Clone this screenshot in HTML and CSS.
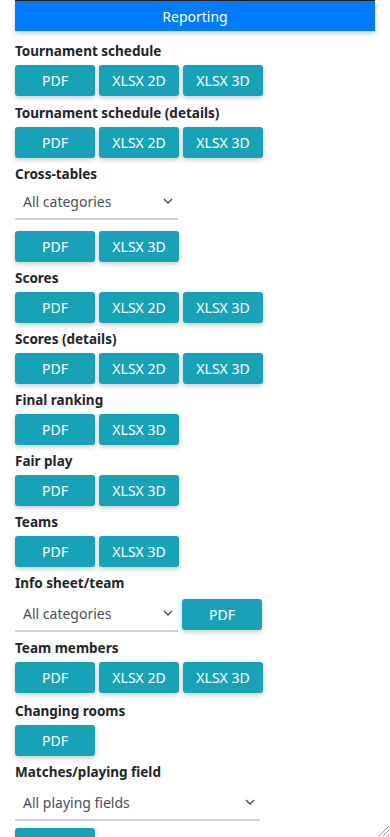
FILE: index.html
```html
<!DOCTYPE html>
<html lang="en">
<head>
<meta charset="utf-8">
<title>Reporting</title>
<link rel="stylesheet" href="styles.css">
</head>
<body>
<div class="topline"></div>
<main class="page">
  <div class="header">Reporting</div>

  <section class="block first">
    <h3 class="title">Tournament schedule</h3>
    <div class="btns"><button class="btn">PDF</button><button class="btn">XLSX 2D</button><button class="btn">XLSX 3D</button></div>
  </section>

  <section class="block second">
    <h3 class="title">Tournament schedule (details)</h3>
    <div class="btns"><button class="btn">PDF</button><button class="btn">XLSX 2D</button><button class="btn">XLSX 3D</button></div>
  </section>

  <section class="block">
    <h3 class="title">Cross-tables</h3>
    <div class="select"><span>All categories</span><svg class="chev" width="10" height="6" viewBox="0 0 10 6"><path d="M1 1l4 4 4-4" fill="none" stroke="#495057" stroke-width="1.4"/></svg></div>
    <div class="btns spaced"><button class="btn">PDF</button><button class="btn">XLSX 3D</button></div>
  </section>

  <section class="block">
    <h3 class="title">Scores</h3>
    <div class="btns"><button class="btn">PDF</button><button class="btn">XLSX 2D</button><button class="btn">XLSX 3D</button></div>
  </section>

  <section class="block">
    <h3 class="title">Scores (details)</h3>
    <div class="btns"><button class="btn">PDF</button><button class="btn">XLSX 2D</button><button class="btn">XLSX 3D</button></div>
  </section>

  <section class="block">
    <h3 class="title">Final ranking</h3>
    <div class="btns"><button class="btn">PDF</button><button class="btn">XLSX 3D</button></div>
  </section>

  <section class="block">
    <h3 class="title">Fair play</h3>
    <div class="btns"><button class="btn">PDF</button><button class="btn">XLSX 3D</button></div>
  </section>

  <section class="block">
    <h3 class="title">Teams</h3>
    <div class="btns"><button class="btn">PDF</button><button class="btn">XLSX 3D</button></div>
  </section>

  <section class="block">
    <h3 class="title">Info sheet/team</h3>
    <div class="row">
      <div class="select"><span>All categories</span><svg class="chev" width="10" height="6" viewBox="0 0 10 6"><path d="M1 1l4 4 4-4" fill="none" stroke="#495057" stroke-width="1.4"/></svg></div>
      <button class="btn">PDF</button>
    </div>
  </section>

  <section class="block">
    <h3 class="title">Team members</h3>
    <div class="btns"><button class="btn">PDF</button><button class="btn">XLSX 2D</button><button class="btn">XLSX 3D</button></div>
  </section>

  <section class="block loose">
    <h3 class="title">Changing rooms</h3>
    <div class="btns"><button class="btn">PDF</button></div>
  </section>

  <section class="block">
    <h3 class="title">Matches/playing field</h3>
    <div class="select wide"><span>All playing fields</span><svg class="chev" width="10" height="6" viewBox="0 0 10 6"><path d="M1 1l4 4 4-4" fill="none" stroke="#495057" stroke-width="1.4"/></svg></div>
    <div class="btns spaced2"><button class="btn">PDF</button></div>
  </section>
</main>
<svg class="grip" width="14" height="14" viewBox="0 0 14 14"><path d="M13 3L3 13M13 7L7 13M13 11L11 13" stroke="#9a9a9a" stroke-width="1"/></svg>
</body>
</html>
```
FILE: styles.css
```css
html, body {
  margin: 0;
  padding: 0;
  background: #fff;
}
body {
  font-family: "Noto Sans", "Open Sans", sans-serif;
  color: #212529;
  font-size: 14px;
}
.topline {
  height: 1px;
  margin: 0 15px;
  background: #222;
}
.page {
  padding: 0 15px 30px;
}
.header {
  height: 30px;
  background: #007bff;
  color: #fff;
  font-size: 14px;
  display: flex;
  align-items: center;
  justify-content: center;
  box-shadow: 0 3px 6px rgba(0,0,0,0.18);
}
.block {
  margin-top: 6.5px;
}
.block.first {
  margin-top: 10px;
}
.block.second {
  margin-top: 7.5px;
}
.block.loose {
  margin-top: 8.5px;
}
.title {
  margin: 0 0 3px;
  padding-top: 1px;
  font-size: 13.5px;
  font-weight: 700;
  line-height: 19.5px;
  color: #212529;
}
.btns {
  display: flex;
  gap: 4px;
}
.btns.spaced {
  margin-top: 11px;
}
.btns.spaced2 {
  margin-top: 7px;
}
.btn {
  width: 80px;
  height: 31px;
  border: 0;
  border-radius: 3px;
  background: #17a2b8;
  color: #fff;
  font-family: inherit;
  font-size: 14px;
  padding: 0;
  box-shadow: 0 2px 5px rgba(0,0,0,0.22);
}
.select {
  width: 163px;
  height: 35px;
  margin-top: -3px;
  box-sizing: border-box;
  border-bottom: 2px solid #ced2da;
  display: flex;
  align-items: center;
  justify-content: space-between;
  padding: 0 5px 0 8px;
  color: #495057;
  font-size: 14px;
}
.select.wide {
  width: 245px;
  margin-top: 0;
}
.chev {
  display: block;
}
.row {
  display: flex;
  align-items: flex-start;
  gap: 4px;
}
.row .select {
  margin-top: 0;
}
.row .btn {
  margin-top: 2px;
}
.grip {
  position: fixed;
  right: 0;
  bottom: 0;
}
```
